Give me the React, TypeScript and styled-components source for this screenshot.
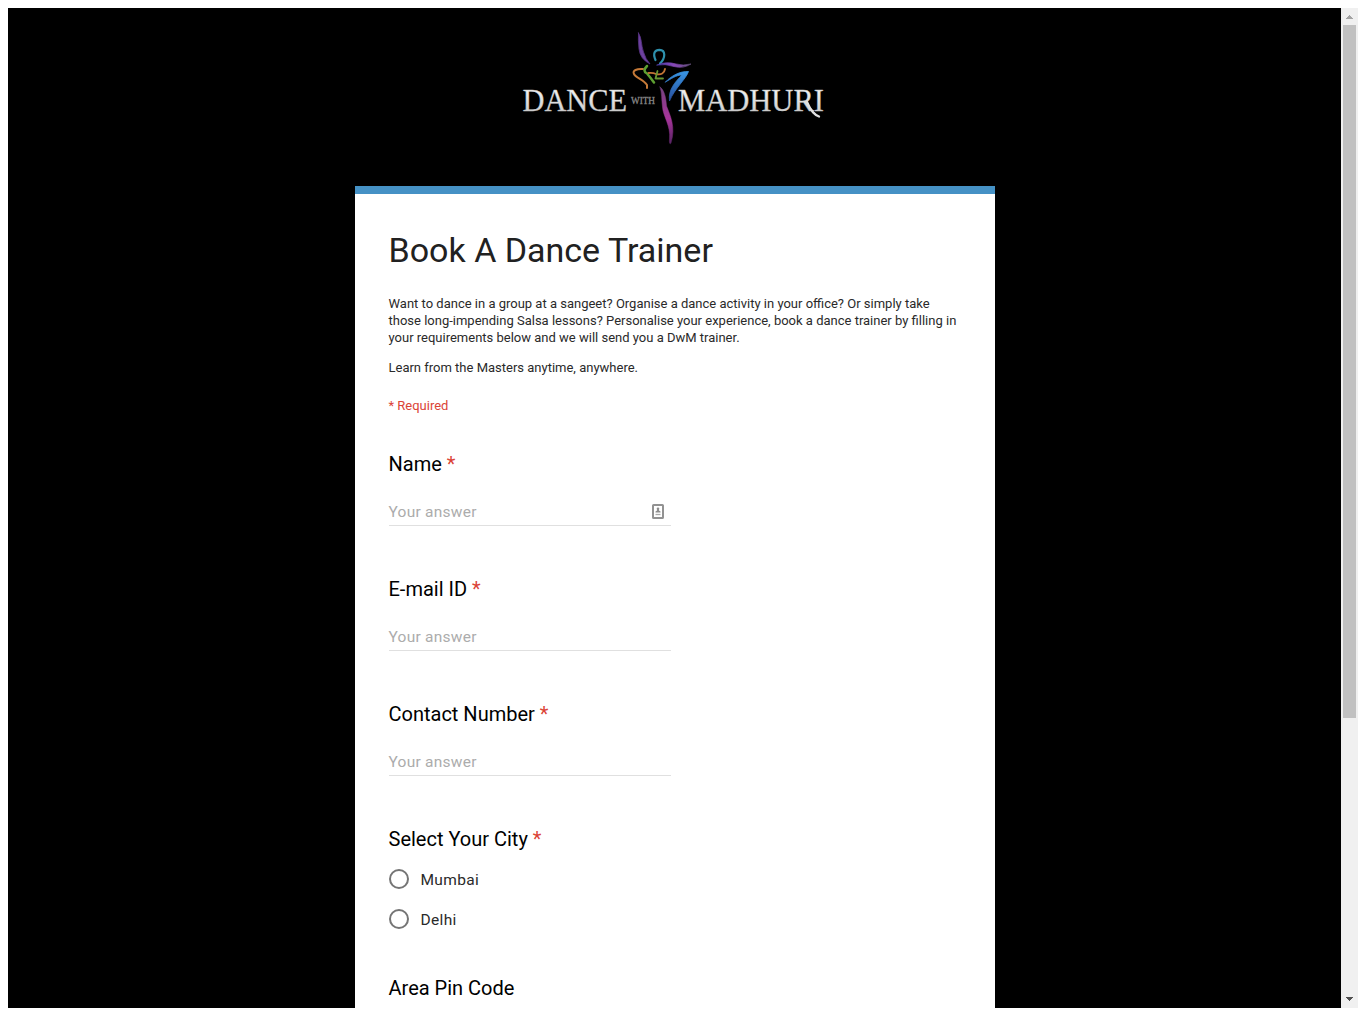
import React from "react";
import styled, { createGlobalStyle } from "styled-components";

const GlobalStyle = createGlobalStyle`
  * { box-sizing: border-box; }
  body { margin: 0; background: #fff; font-family: Roboto, "Liberation Sans", sans-serif; overflow: hidden; }
`;

const Frame = styled.div`
  display: flex;
  width: 1350px;
  height: 1000px;
  margin: 8px;
  overflow: hidden;
`;

const Page = styled.main`
  flex: 1;
  display: flex;
  flex-direction: column;
  align-items: center;
  background: #000;
  overflow: hidden;
`;

const Header = styled.header`
  flex: none;
  height: 178px;
  padding-top: 12px;
`;

const Card = styled.form`
  flex: none;
  width: 640px;
  height: 1400px;
  border-top: 8px solid #4591c5;
  padding: 34px 34px 0;
  background: #fff;
`;

const Title = styled.h1`
  margin: 0 0 22px;
  font-size: 34px;
  font-weight: 400;
  line-height: 45px;
  color: #212121;
`;

const Paragraph = styled.p`
  margin: 0 0 13px;
  font-size: 13px;
  line-height: 17px;
  color: #2a2a2a;
`;

const RequiredNote = styled.div`
  margin-top: 21px;
  font-size: 13px;
  line-height: 17px;
  color: #db4437;
`;

const Questions = styled.div`
  display: flex;
  flex-direction: column;
  padding-top: 37px;
`;

const Question = styled.section<{ $height: number }>`
  height: ${(p) => p.$height}px;
`;

const Label = styled.h2`
  margin: 0;
  font-size: 20px;
  font-weight: 400;
  line-height: 27px;
  color: #000;
`;

const Star = styled.span`
  color: #db4437;
`;

const Field = styled.div`
  display: flex;
  align-items: center;
  justify-content: space-between;
  width: 282px;
  height: 27px;
  margin-top: 21px;
  padding-right: 7px;
  border-bottom: 1px solid #e0e0e0;
`;

const Placeholder = styled.span`
  font-size: 15.5px;
  line-height: 24px;
  letter-spacing: 0.26px;
  color: #acacac;
`;

const Options = styled.div`
  display: flex;
  flex-direction: column;
  gap: 20px;
  padding-top: 16px;
`;

const Option = styled.label`
  display: flex;
  align-items: center;
  gap: 12px;
  height: 20px;
  font-size: 15.5px;
  line-height: 20px;
  letter-spacing: 0.33px;
  color: #2a2a2a;
`;

const OptionText = styled.span`
  padding-top: 2px;
`;

const Radio = styled.span`
  width: 20px;
  height: 20px;
  border: 2px solid #757575;
  border-radius: 50%;
`;

const Scrollbar = styled.div`
  display: flex;
  flex-direction: column;
  align-items: center;
  width: 17px;
  background: #f0f0f0;
`;

const ArrowBox = styled.div`
  display: flex;
  width: 17px;
  height: 17px;
`;

const Thumb = styled.div`
  width: 13px;
  height: 693px;
  background: #c1c1c1;
`;

const Track = styled.div`
  flex: 1;
`;

const ContactSvg = styled.svg`
  margin-bottom: 1px;
`;

function Logo() {
  return (
    <svg width="330" height="135" viewBox="510 20 330 135" fill="none" strokeLinecap="round" strokeLinejoin="round">
      <defs>
        <linearGradient id="silver" x1="0" y1="0" x2="0" y2="1">
          <stop offset="0" stopColor="#fff" />
          <stop offset="1" stopColor="#c4c4c4" />
        </linearGradient>
        <linearGradient id="leg" x1="0" y1="0" x2="0" y2="1">
          <stop offset="0" stopColor="#74427f" />
          <stop offset=".55" stopColor="#a7359b" />
          <stop offset="1" stopColor="#582364" />
        </linearGradient>
        <linearGradient id="arm" x1="0" y1="0" x2="1" y2="0">
          <stop offset="0" stopColor="#4b3eae" />
          <stop offset=".5" stopColor="#8747b5" />
          <stop offset="1" stopColor="#64517c" />
        </linearGradient>
        <linearGradient id="knee" x1="0" y1="0" x2="0" y2="1">
          <stop offset="0" stopColor="#3895e4" />
          <stop offset="1" stopColor="#284d9b" />
        </linearGradient>
      </defs>
      <g fontFamily="'Liberation Serif', serif" fill="url(#silver)" stroke="#bdbdbd" strokeWidth=".35">
        <text x="522.5" y="111" fontSize="32" textLength="104.5" lengthAdjust="spacingAndGlyphs">DANCE</text>
        <text x="631" y="104" fontSize="10" textLength="24" lengthAdjust="spacingAndGlyphs" fill="#9a9a9a" stroke="#777">WITH</text>
        <text x="678" y="111" fontSize="32" textLength="146" lengthAdjust="spacingAndGlyphs">MADHURI</text>
      </g>
      <path d="M807 102Q812 114 819 116.5" stroke="#e2e2e2" strokeWidth="2.3" />
      <path d="M638.5 33C642 38 641 45 643.5 52Q645.5 59 650 64Q640 59 639 49Q638 40 638.5 33Z" fill="#6d419f" stroke="#573283" strokeWidth=".8" />
      <path d="M655.5 60C652.5 53 655 49.8 659.5 49.8C666 50 665.5 58 660 63.5" stroke="#2e91ad" strokeWidth="2.2" />
      <path d="M657 65Q666 61 676 64Q683 66 691 64Q683 69 674 66.5Q665 63.5 657 65Z" fill="url(#arm)" stroke="url(#arm)" strokeWidth=".7" />
      <path d="M643 69C637 68.5 632 70.5 634 74C636 78 644 80 647 85L647 88" stroke="#c67a38" strokeWidth="2" />
      <path d="M647 66Q642 71 647 73.5Q650 77 654 82.5" stroke="#5d9f31" strokeWidth="2.5" />
      <path d="M648.5 73Q653 72.5 656 74Q664 75.5 665 69" stroke="#c17435" strokeWidth="1.8" />
      <path d="M657.5 71L655.5 78.5H663" stroke="#689632" strokeWidth="1.8" />
      <path d="M665.5 82C671 76 680 71 688.5 71.5C686 79 675 88 669.5 101C668 90 675 82 682 75C676 75 671 79 665.5 82Z" fill="url(#knee)" stroke="url(#knee)" strokeWidth=".8" />
      <path d="M660 87C664.5 90 666 98 666.5 106C670 115 676 127 671 143C670 145 669 143 669.5 139C671 126 663 116 662.5 107C661.5 99 662 93 660 87Z" fill="url(#leg)" stroke="url(#leg)" strokeWidth=".5" />
    </svg>
  );
}

function ContactIcon() {
  return (
    <ContactSvg width="12" height="15" viewBox="0 0 12 15">
      <rect x="1" y="1" width="10" height="13" rx=".6" fill="#fff" stroke="#929292" strokeWidth="2" />
      <circle cx="6" cy="4.7" r="1.3" fill="#8d8d8d" />
      <path d="M5 5H7V6.5L8.5 7.5V8.5H3.5V7.5L5 6.5Z" fill="#8d8d8d" />
      <path d="M3.5 10.5H8.5" stroke="#aaa" strokeWidth="1.3" />
    </ContactSvg>
  );
}

const textQuestions = ["Name", "E-mail ID", "Contact Number"];
const cities = ["Mumbai", "Delhi"];

export default function App() {
  return (
    <>
      <GlobalStyle />
      <Frame>
        <Page>
          <Header><Logo /></Header>
          <Card>
            <Title>Book A Dance Trainer</Title>
            <Paragraph>
              Want to dance in a group at a sangeet? Organise a dance activity in your office? Or simply take
              those long-impending Salsa lessons? Personalise your experience, book a dance trainer by filling in
              your requirements below and we will send you a DwM trainer.
            </Paragraph>
            <Paragraph>Learn from the Masters anytime, anywhere.</Paragraph>
            <RequiredNote>* Required</RequiredNote>
            <Questions>
              {textQuestions.map((label, i) => (
                <Question key={label} $height={125}>
                  <Label>{label} <Star>*</Star></Label>
                  <Field>
                    <Placeholder>Your answer</Placeholder>
                    {i === 0 && <ContactIcon />}
                  </Field>
                </Question>
              ))}
              <Question $height={149}>
                <Label>Select Your City <Star>*</Star></Label>
                <Options>
                  {cities.map((city) => (
                    <Option key={city}><Radio /><OptionText>{city}</OptionText></Option>
                  ))}
                </Options>
              </Question>
              <Question $height={125}>
                <Label>Area Pin Code</Label>
              </Question>
            </Questions>
          </Card>
        </Page>
        <Scrollbar>
          <ArrowBox>
            <svg width="17" height="17" shapeRendering="crispEdges"><path d="M8 7h1v1h1v1h1v1h1v1H5v-1h1V9h1V8h1z" fill="#a3a3a3" /></svg>
          </ArrowBox>
          <Thumb />
          <Track />
          <ArrowBox>
            <svg width="17" height="17" shapeRendering="crispEdges"><path d="M5 6h7v1h-1v1h-1v1H9v1H8V9H7V8H6V7H5z" fill="#505050" /></svg>
          </ArrowBox>
        </Scrollbar>
      </Frame>
    </>
  );
}
